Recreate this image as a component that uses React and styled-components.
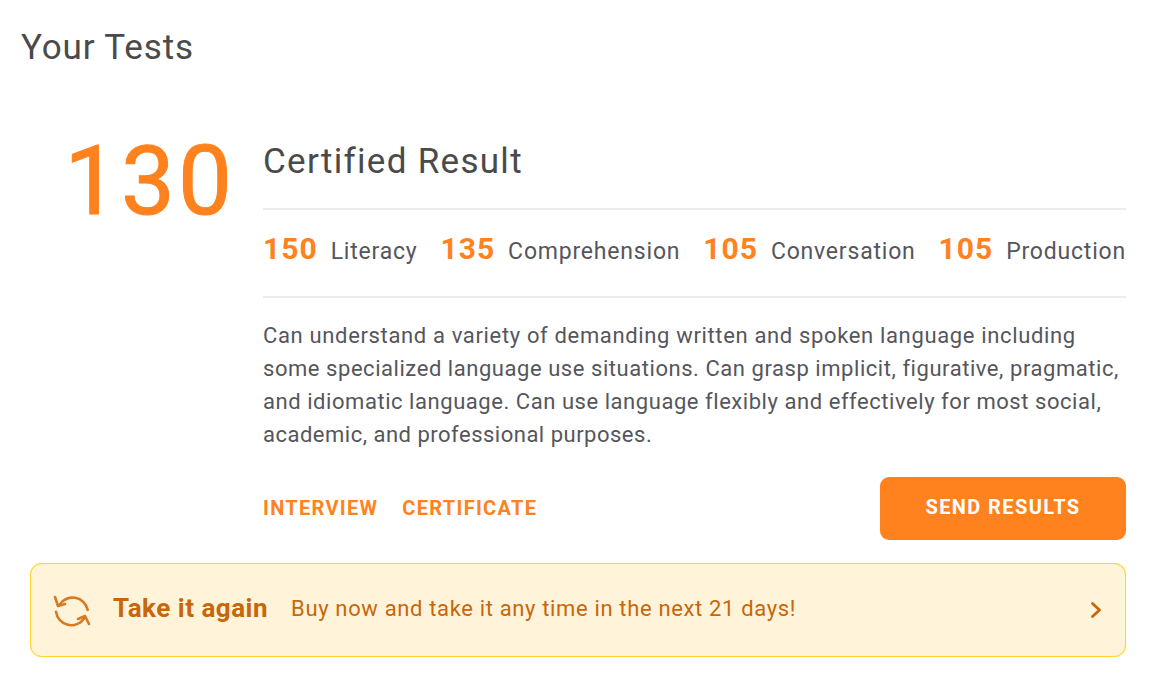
import React from "react";
import styled, { createGlobalStyle } from "styled-components";

const GlobalStyle = createGlobalStyle`
  html, body {
    margin: 0;
    padding: 0;
    background: #fff;
    font-family: Roboto, "Liberation Sans", sans-serif;
  }
`;

const Page = styled.div`
  width: 1160px;
  height: 682px;
  box-sizing: border-box;
  padding: 26px 34px 0 21px;
  overflow: hidden;
`;

const Title = styled.h1`
  margin: 0;
  font-size: 35px;
  line-height: 44px;
  font-weight: 400;
  letter-spacing: 0.85px;
  color: #4a4a4a;
`;

const Result = styled.div`
  display: flex;
  margin-top: 54px;
`;

const Score = styled.div`
  width: 242px;
  box-sizing: border-box;
  padding: 1px 28px 0 0;
  text-align: right;
  font-size: 96px;
  line-height: 112px;
  font-weight: 400;
  letter-spacing: 3px;
  color: #ff821e;
  -webkit-text-stroke: 1px #ff821e;
`;

const Details = styled.div`
  flex: 1;
  min-width: 0;
`;

const Heading = styled.h2`
  margin: 0;
  padding: 16px 0 24px;
  font-size: 35px;
  line-height: 44px;
  font-weight: 400;
  letter-spacing: 1.3px;
  color: #4a4a4a;
`;

const Scores = styled.div`
  display: flex;
  justify-content: space-between;
  align-items: baseline;
  height: 86px;
  line-height: 78px;
  border-top: 2px solid #ececec;
  border-bottom: 2px solid #ececec;
`;

const SubScore = styled.div`
  display: flex;
  align-items: baseline;
  gap: 13px;
`;

const Points = styled.span`
  font-size: 30px;
  font-weight: 700;
  letter-spacing: 1px;
  color: #ff821e;
`;

const Skill = styled.span`
  font-size: 23px;
  letter-spacing: 0.8px;
  color: #55565c;
`;

const Description = styled.p`
  margin: 21px 0 0;
  font-size: 22px;
  line-height: 33px;
  color: #55565c;
`;

const DescriptionLine = styled.span`
  display: block;
  white-space: nowrap;
  letter-spacing: ${(p) => p.$spacing}px;
`;

const Actions = styled.div`
  display: flex;
  align-items: center;
  margin-top: 26px;
`;

const TextLink = styled.a`
  margin-right: 24px;
  padding-bottom: 2px;
  font-size: 20px;
  font-weight: 700;
  letter-spacing: 1.3px;
  text-transform: uppercase;
  color: #ff821e;
`;

const SendButton = styled.button`
  margin-left: auto;
  width: 246px;
  height: 63px;
  padding: 0 0 3px;
  border: 0;
  border-radius: 9px;
  background: #ff821e;
  color: #fff;
  font-family: inherit;
  font-size: 20px;
  font-weight: 700;
  letter-spacing: 1.4px;
  text-transform: uppercase;
`;

const Banner = styled.div`
  display: flex;
  align-items: center;
  height: 94px;
  box-sizing: border-box;
  margin: 23px 0 0 9px;
  padding: 0 23px 0 22px;
  border: 1px solid #ffd42e;
  box-shadow: 0 0 1px #ffd42e;
  border-radius: 12px;
  background: #fff4da;
  color: #c8660a;
`;

const BannerIcon = styled.svg`
  width: 38px;
  height: 38px;
  margin-right: 22px;
  flex: none;
`;

const BannerTitle = styled.strong`
  margin: 0 23px 4px 0;
  font-size: 26px;
  font-weight: 700;
  letter-spacing: 0.5px;
`;

const BannerText = styled.span`
  margin-bottom: 4px;
  font-size: 22px;
  letter-spacing: 0.65px;
`;

const Chevron = styled.svg`
  width: 12px;
  height: 18px;
  margin-left: auto;
`;

const subScores = [
  ["150", "Literacy"],
  ["135", "Comprehension"],
  ["105", "Conversation"],
  ["105", "Production"],
];

const descriptionLines = [
  ["Can understand a variety of demanding written and spoken language including", 0.65],
  ["some specialized language use situations. Can grasp implicit, figurative, pragmatic,", 0.55],
  ["and idiomatic language. Can use language flexibly and effectively for most social,", 0.55],
  ["academic, and professional purposes.", 0.5],
];

export default function App() {
  return (
    <Page>
      <GlobalStyle />
      <Title>Your Tests</Title>
      <Result>
        <Score>130</Score>
        <Details>
          <Heading>Certified Result</Heading>
          <Scores>
            {subScores.map(([points, skill]) => (
              <SubScore key={skill}>
                <Points>{points}</Points>
                <Skill>{skill}</Skill>
              </SubScore>
            ))}
          </Scores>
          <Description>
            {descriptionLines.map(([line, spacing]) => (
              <DescriptionLine key={line} $spacing={spacing}>
                {line}{" "}
              </DescriptionLine>
            ))}
          </Description>
          <Actions>
            <TextLink>Interview</TextLink>
            <TextLink>Certificate</TextLink>
            <SendButton>Send Results</SendButton>
          </Actions>
        </Details>
      </Result>
      <Banner>
        <BannerIcon viewBox="0 0 38 38" fill="none" stroke="#d67a26" strokeWidth="2.6" strokeLinecap="round" strokeLinejoin="round">
          <path d="M6.3 14A15.5 15.5 0 0 1 34.7 19" />
          <path d="M2 6L5 15L12 13" />
          <path d="M3 20.7A15.5 15.5 0 0 0 31.3 27.3" />
          <path d="M25 28L32 25L36 33" />
        </BannerIcon>
        <BannerTitle>Take it again</BannerTitle>
        <BannerText>Buy now and take it any time in the next 21 days!</BannerText>
        <Chevron viewBox="0 0 12 18" fill="none" stroke="#c8660a" strokeWidth="2.8" strokeLinecap="round" strokeLinejoin="round">
          <path d="M2.5 2.5L9.5 9l-7 6.5" />
        </Chevron>
      </Banner>
    </Page>
  );
}
